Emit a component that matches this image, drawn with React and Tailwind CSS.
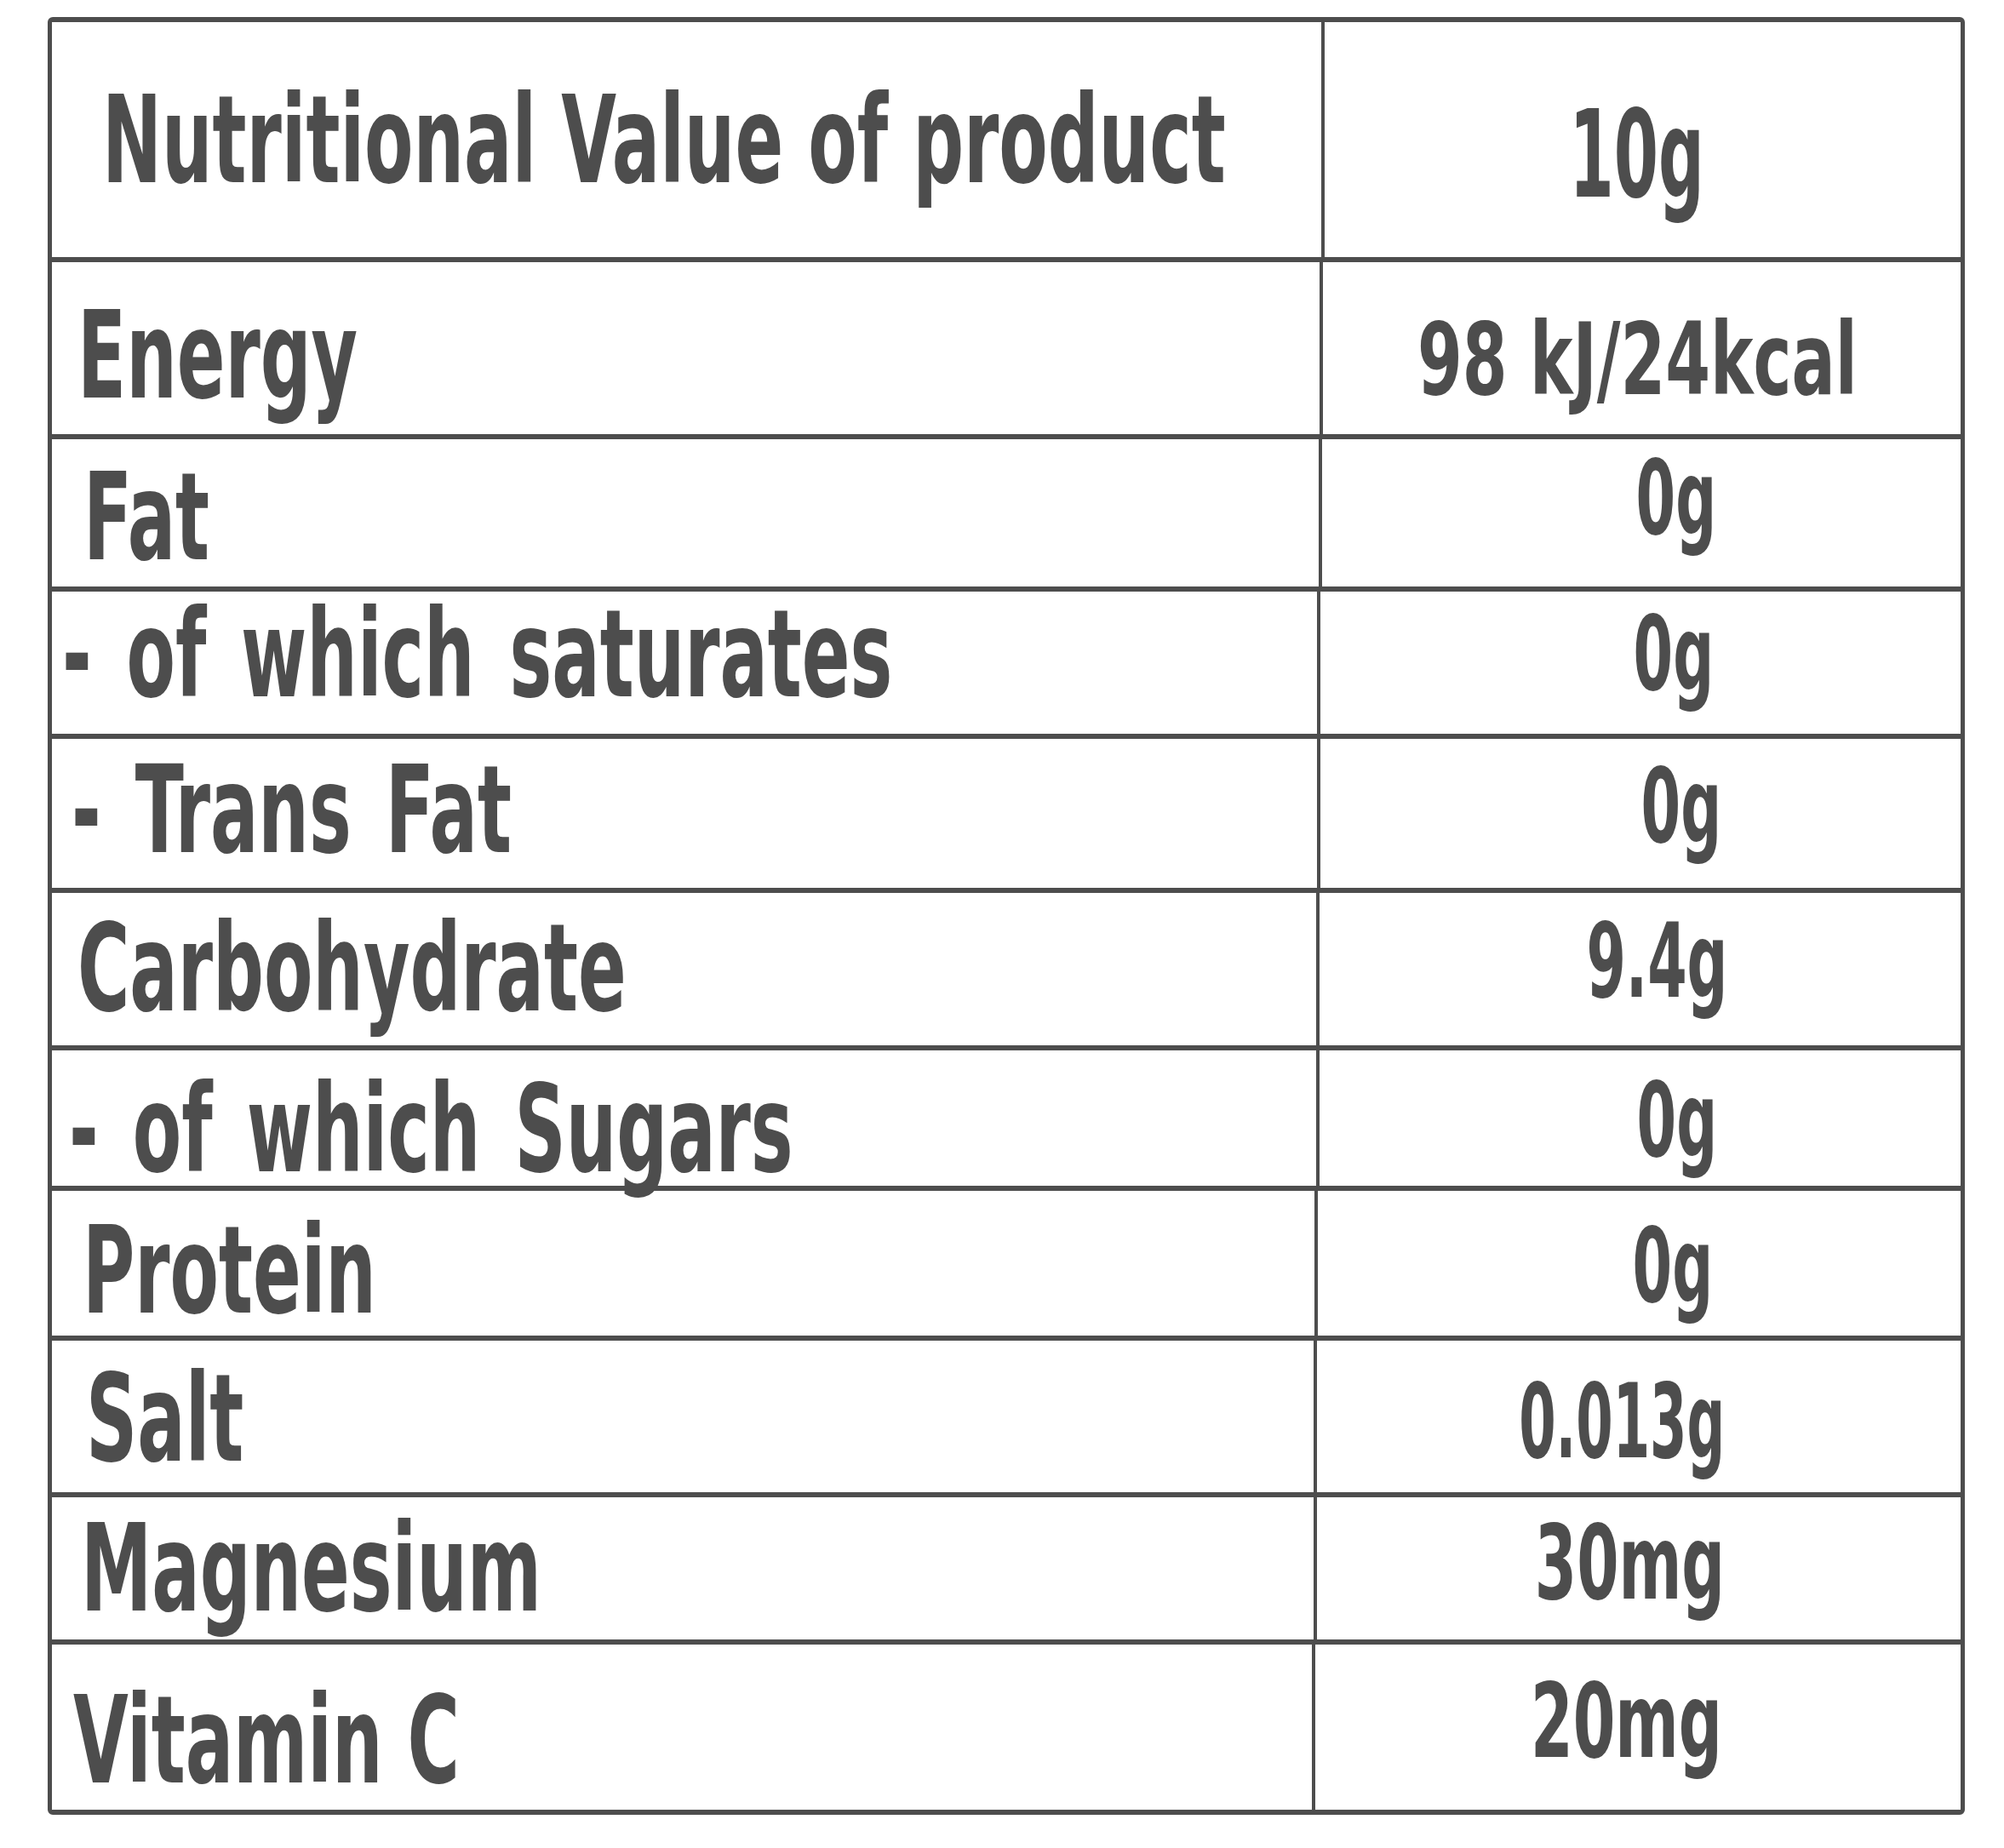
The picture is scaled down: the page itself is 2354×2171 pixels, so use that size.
import React from 'react';

// Nutrition facts table: label column + value column, condensed bold type
const rows = [
  { label: 'Energy', value: '98 kJ/24kcal', h: 'h-[208px]', cols: 'grid-cols-[1493px_1fr]', lpad: 'pl-[30px] pt-[17px]', ltext: '', vpad: 'pr-[11px] pt-[26px]', vtext: 'text-[118px] scale-x-[0.715]' },
  { label: 'Fat', value: '0g', h: 'h-[179px]', cols: 'grid-cols-[1492px_1fr]', lpad: 'pl-[37px] pt-[9px]', ltext: '', vpad: 'pl-[82px] pb-[34px]', vtext: 'text-[121px] scale-x-[0.615]' },
  { label: '- of which saturates', value: '0g', h: 'h-[173px]', cols: 'grid-cols-[1490px_1fr]', lpad: 'pl-[12px] pb-[21px]', ltext: '[word-spacing:18px]', vpad: 'pl-[78px] pb-[21px]', vtext: 'text-[121px] scale-x-[0.615]' },
  { label: '- Trans Fat', value: '0g', h: 'h-[181px]', cols: 'grid-cols-[1490px_1fr]', lpad: 'pl-[23px] pb-[9px]', ltext: '[word-spacing:17px]', vpad: 'pl-[96px] pb-[17px]', vtext: 'text-[121px] scale-x-[0.615]' },
  { label: 'Carbohydrate', value: '9.4g', h: 'h-[185px]', cols: 'grid-cols-[1489px_1fr]', lpad: 'pl-[30px] pb-[3px]', ltext: '', vpad: 'pl-[39px] pb-[18px]', vtext: 'text-[121px] scale-x-[0.613]' },
  { label: '- of which Sugars', value: '0g', h: 'h-[165px]', cols: 'grid-cols-[1489px_1fr]', lpad: 'pl-[20px] pt-[21px]', ltext: '[word-spacing:17px]', vpad: 'pl-[86px]', vtext: 'text-[121px] scale-x-[0.615]' },
  { label: 'Protein', value: '0g', h: 'h-[176px]', cols: 'grid-cols-[1487px_1fr]', lpad: 'pl-[36px] pt-[16px]', ltext: '', vpad: 'pl-[78px] pt-[7px]', vtext: 'text-[121px] scale-x-[0.615]' },
  { label: 'Salt', value: '0.013g', h: 'h-[184px]', cols: 'grid-cols-[1486px_1fr]', lpad: 'pl-[40px] pt-[4px]', ltext: '', vpad: 'pr-[40px] pt-[13px]', vtext: 'text-[121px] scale-x-[0.573]' },
  { label: 'Magnesium', value: '30mg', h: 'h-[173px]', cols: 'grid-cols-[1486px_1fr]', lpad: 'pl-[34px]', ltext: '', vpad: 'pr-[22px] pb-[12px]', vtext: 'text-[121px] scale-x-[0.651]' },
  { label: 'Vitamin C', value: '20mg', h: 'h-[194px]', cols: 'grid-cols-[1484px_1fr]', lpad: 'pl-[25px] pt-[30px]', ltext: '', vpad: 'pr-[28px] pb-[14px]', vtext: 'text-[121px] scale-x-[0.656]' },
];

const font = "font-['DejaVu_Sans_Condensed','DejaVu_Sans',sans-serif] font-bold font-stretch-condensed";

const App = () => {
  return (
    <div className="min-h-screen bg-white pt-[20px] pl-[56px]">
      <div className={`w-[2252px] border-x-[5px] border-y-[6px] border-[#4d4d4d] rounded-[6px] text-[#4d4d4d] ${font}`}>
        {/* header */}
        <div className="grid grid-cols-[1495px_1fr] h-[282px] border-b-[6px] border-[#4d4d4d]">
          <div className="flex items-center pl-[59px] border-r-[4px] border-[#4d4d4d]">
            <span className="block origin-left scale-x-[0.65] whitespace-nowrap text-[143px] leading-none">
              Nutritional Value of product
            </span>
          </div>
          <div className="flex items-center justify-center pr-[13px] pt-[34px]">
            <span className="block scale-x-[0.584] whitespace-nowrap text-[143px] leading-none">10g</span>
          </div>
        </div>

        {rows.map((r, i) => (
          <div
            key={r.label}
            className={`grid ${r.cols} ${r.h} ${i < rows.length - 1 ? 'border-b-[6px] border-[#4d4d4d]' : ''}`}
          >
            <div className={`flex items-center ${r.lpad} border-r-[4px] border-[#4d4d4d]`}>
              <span className={`block origin-left scale-x-[0.65] whitespace-nowrap text-[143px] leading-none ${r.ltext}`}>
                {r.label}
              </span>
            </div>
            <div className={`flex items-center justify-center ${r.vpad}`}>
              <span className={`block whitespace-nowrap leading-none ${r.vtext}`}>{r.value}</span>
            </div>
          </div>
        ))}
      </div>
    </div>
  );
};

export default App;
